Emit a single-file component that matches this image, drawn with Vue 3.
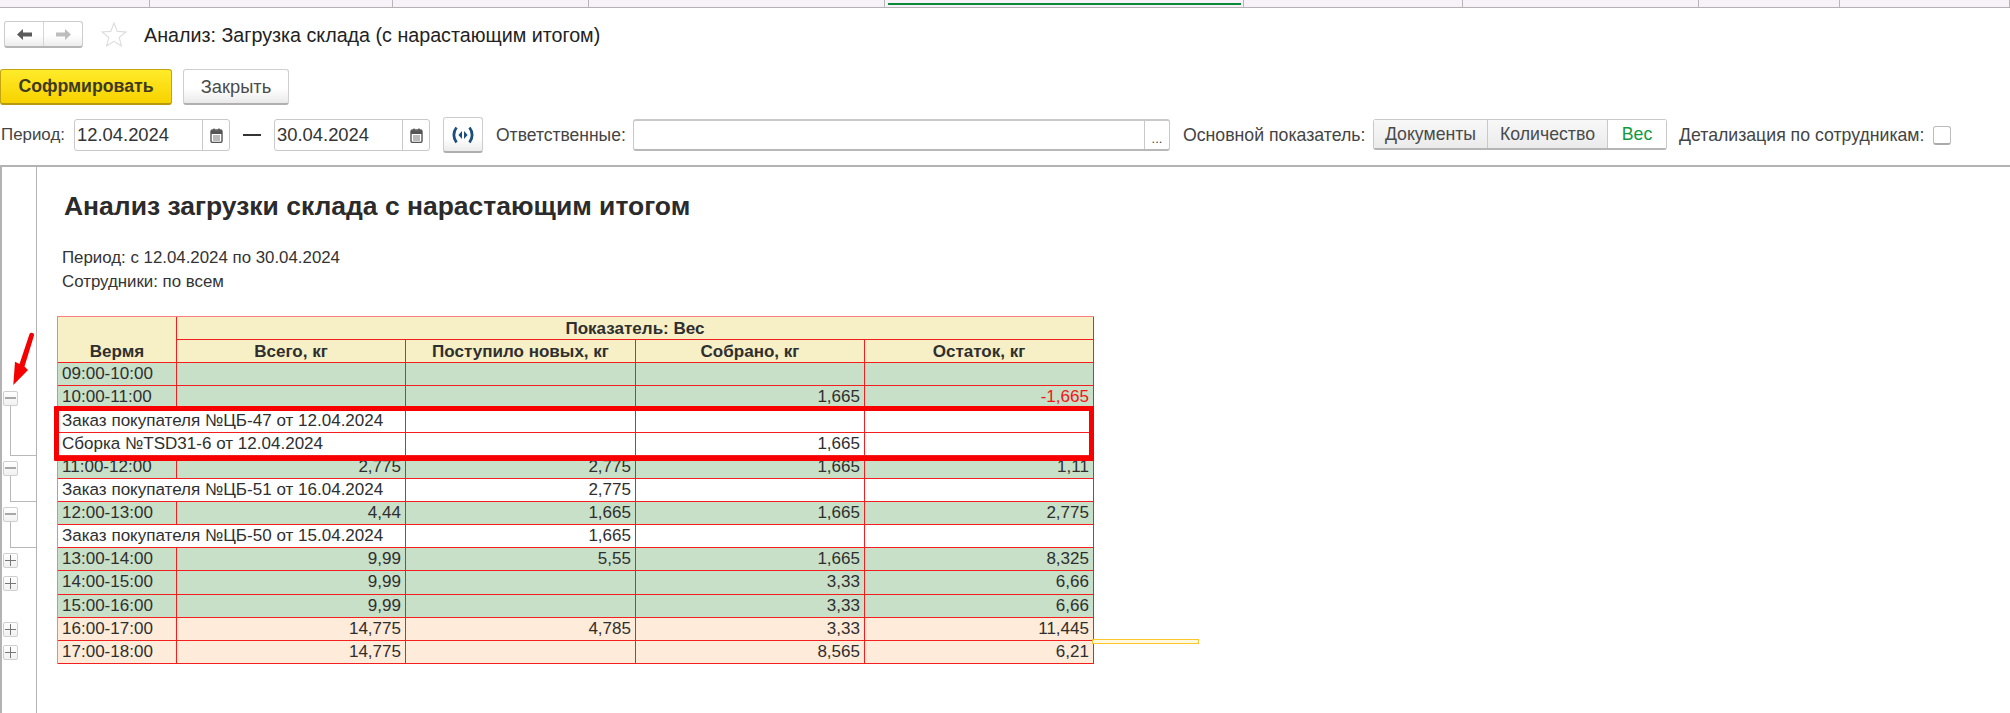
<script setup>
const tabs = [150, 243, 196, 296, 359, 219, 236, 141, 170]
const rows = [
  { kind: 'g', label: '09:00-10:00', v: ['', '', '', ''] },
  { kind: 'g', label: '10:00-11:00', v: ['', '', '1,665', '-1,665'], red: true },
  { kind: 'd', label: 'Заказ покупателя №ЦБ-47 от 12.04.2024', v: ['', '', ''] },
  { kind: 'd', label: 'Сборка №TSD31-6 от 12.04.2024', v: ['', '1,665', ''] },
  { kind: 'g', label: '11:00-12:00', v: ['2,775', '2,775', '1,665', '1,11'] },
  { kind: 'd', label: 'Заказ покупателя №ЦБ-51 от 16.04.2024', v: ['2,775', '', ''] },
  { kind: 'g', label: '12:00-13:00', v: ['4,44', '1,665', '1,665', '2,775'] },
  { kind: 'd', label: 'Заказ покупателя №ЦБ-50 от 15.04.2024', v: ['1,665', '', ''] },
  { kind: 'g', label: '13:00-14:00', v: ['9,99', '5,55', '1,665', '8,325'] },
  { kind: 'g', label: '14:00-15:00', v: ['9,99', '', '3,33', '6,66'] },
  { kind: 'g', label: '15:00-16:00', v: ['9,99', '', '3,33', '6,66'] },
  { kind: 'o', label: '16:00-17:00', v: ['14,775', '4,785', '3,33', '11,445'] },
  { kind: 'o', label: '17:00-18:00', v: ['14,775', '', '8,565', '6,21'] },
]
const tree = [
  { top: 224, sign: 'minus', tail: 50 },
  { top: 5, sign: 'minus', tail: 26 },
  { top: 5, sign: 'minus', tail: 26 },
  { top: 5, sign: 'plus', tail: 0 },
  { top: 8, sign: 'plus', tail: 0 },
  { top: 31, sign: 'plus', tail: 0 },
  { top: 8, sign: 'plus', tail: 0 },
]
</script>

<template>
  <div class="page">
    <div class="tabs">
      <div
        v-for="(w, i) in tabs"
        :key="i"
        class="tab"
        :class="{ active: i === 4 }"
        :style="{ width: w + 'px' }"
      ></div>
    </div>

    <div class="head">
      <div class="nav">
        <button class="nav-b">
          <svg width="15" height="11" viewBox="0 0 15 11"><path d="M0 5.5 6 0V3.5H15V7.5H6V11Z" fill="#5a5a5a" /></svg>
        </button>
        <button class="nav-b">
          <svg width="15" height="11" viewBox="0 0 15 11"><path d="M15 5.5 9 0V3.5H0V7.5H9V11Z" fill="#bdbdbd" /></svg>
        </button>
      </div>
      <svg class="star" width="26" height="25" viewBox="0 0 26 25">
        <path d="M13 1 16.2 9.4 25 9.9 18.2 15.5 20.4 24 13 19.3 5.6 24 7.8 15.5 1 9.9 9.8 9.4Z" fill="none" stroke="#dcdcdc" stroke-width="1.1" />
      </svg>
      <div class="title">Анализ: Загрузка склада (с нарастающим итогом)</div>
    </div>

    <div class="actions">
      <button class="primary">Софрмировать</button>
      <button class="secondary">Закрыть</button>
    </div>

    <div class="filters">
      <span class="lbl l-period">Период:</span>
      <div class="field date">
        <span class="val">12.04.2024</span>
        <span class="suffix cal">
          <svg width="13" height="15" viewBox="0 0 13 15"><path d="M1 3.5C1 2.6 1.6 2 2.5 2H10.5C11.4 2 12 2.6 12 3.5V13C12 13.8 11.4 14.4 10.5 14.4H2.5C1.6 14.4 1 13.8 1 13Z" fill="none" stroke="#555" stroke-width="1.4" /><path d="M1 2.6H12V6H1Z M3.3 0.5H4.7V3H3.3Z M8.3 0.5H9.7V3H8.3Z" fill="#555" /><path d="M3 8H10M3 10H10M3 12H10" stroke="#777" stroke-width="1" /></svg>
        </span>
      </div>
      <span class="dash"></span>
      <div class="field date">
        <span class="val">30.04.2024</span>
        <span class="suffix cal">
          <svg width="13" height="15" viewBox="0 0 13 15"><path d="M1 3.5C1 2.6 1.6 2 2.5 2H10.5C11.4 2 12 2.6 12 3.5V13C12 13.8 11.4 14.4 10.5 14.4H2.5C1.6 14.4 1 13.8 1 13Z" fill="none" stroke="#555" stroke-width="1.4" /><path d="M1 2.6H12V6H1Z M3.3 0.5H4.7V3H3.3Z M8.3 0.5H9.7V3H8.3Z" fill="#555" /><path d="M3 8H10M3 10H10M3 12H10" stroke="#777" stroke-width="1" /></svg>
        </span>
      </div>
      <button class="period-btn">
        <svg width="24" height="18" viewBox="0 0 24 18">
          <path d="M5.5 1.5C2 6 2 12 5.5 16.5M18.5 1.5C22 6 22 12 18.5 16.5" fill="none" stroke="#1d4f7c" stroke-width="2.8" />
          <path d="M11 5 7.4 9 11 13ZM13 5 16.6 9 13 13Z" fill="#1d4f7c" />
        </svg>
      </button>
      <span class="lbl l-resp">Ответственные:</span>
      <div class="field resp">
        <span class="val"></span>
        <span class="suffix dots">...</span>
      </div>
      <span class="lbl l-main">Основной показатель:</span>
      <div class="seg">
        <span class="seg-i s1">Документы</span>
        <span class="seg-i s2">Количество</span>
        <span class="seg-i s3 on">Вес</span>
      </div>
      <span class="lbl l-det">Детализация по сотрудникам:</span>
      <span class="check"></span>
    </div>

    <div class="report">
      <div class="gutter">
        <div
          v-for="(n, i) in tree"
          :key="i"
          class="node"
          :style="{ marginTop: n.top + 'px' }"
        >
          <div class="box" :class="n.sign"></div>
          <div v-if="n.tail" class="tail" :style="{ height: n.tail + 'px' }"></div>
        </div>
        <svg class="arrow" width="30" height="58" viewBox="0 0 30 58">
          <path d="M19.5 5C20.5 3 24.5 3.5 24 6.5L14.5 37.5 18 41 3.3 56 5 32.7 9.5 35Z" fill="#f50000" />
        </svg>
      </div>

      <div class="sheet">
        <h1 class="rep-title">Анализ загрузки склада с нарастающим итогом</h1>
        <div class="meta">Период: с 12.04.2024 по 30.04.2024</div>
        <div class="meta">Сотрудники: по всем</div>

        <div class="table">
          <div class="c hd time">Вермя</div>
          <div class="c hd top">Показатель: Вес</div>
          <div class="c hd">Всего, кг</div>
          <div class="c hd">Поступило новых, кг</div>
          <div class="c hd">Собрано, кг</div>
          <div class="c hd">Остаток, кг</div>

          <template v-for="(r, i) in rows" :key="i">
            <div class="c lab" :class="[r.kind, { wide: r.kind === 'd' }]">{{ r.label }}</div>
            <div
              v-for="(v, j) in r.v"
              :key="j"
              class="c num"
              :class="[r.kind, { neg: r.red && j === 3 }]"
            >{{ v }}</div>
          </template>

          <div class="mark"></div>
          <div class="sel"></div>
        </div>
      </div>
    </div>
  </div>
</template>

<style scoped>
.page {
  width: 2010px;
  height: 713px;
  overflow: hidden;
  background: #fff;
  font-family: "Liberation Sans", Arial, sans-serif;
  color: #333;
}
.tabs {
  display: flex;
  height: 8px;
  background: #f6f2f7;
  border-bottom: 1px solid #b4b0b4;
  box-sizing: border-box;
}
.tab {
  border-right: 1px solid #b9b5b9;
  box-sizing: border-box;
  position: relative;
}
.tab.active::after {
  content: "";
  position: absolute;
  left: 3px;
  right: 2px;
  top: 3px;
  height: 2px;
  background: #0a8a38;
}
.head {
  display: flex;
  align-items: center;
  height: 27px;
  margin-top: 13px;
  padding-left: 4px;
}
.nav {
  display: flex;
  width: 79px;
  height: 27px;
  box-sizing: border-box;
  border: 1px solid #cdcdcd;
  border-bottom: 2px solid #b5b5b5;
  border-radius: 3px;
  background: linear-gradient(#fff 55%, #ececec);
}
.nav-b {
  flex: 1;
  padding: 0;
  border: 0;
  background: none;
  display: flex;
  align-items: center;
  justify-content: center;
}
.nav-b:first-child {
  border-right: 1px solid #d5d5d5;
}
.star {
  margin-left: 18px;
}
.title {
  margin-left: 17px;
  font-size: 19.7px;
  line-height: 29px;
  padding-top: 1px;
  color: #222;
  white-space: nowrap;
}
.actions {
  display: flex;
  gap: 11px;
  margin-top: 21px;
  height: 36px;
}
.primary {
  width: 172px;
  height: 36px;
  padding: 0;
  border: 1px solid #c3a512;
  border-bottom: 2px solid #b79a10;
  border-radius: 3px;
  background: linear-gradient(#ffeb2a, #f7d200);
  font: bold 17.7px "Liberation Sans", Arial, sans-serif;
  color: #3d3a20;
}
.secondary {
  width: 106px;
  height: 36px;
  padding: 0;
  border: 1px solid #cfcfcf;
  border-bottom: 2px solid #b0b0b0;
  border-radius: 3px;
  background: linear-gradient(#fff 55%, #eaeaea);
  font: 18.3px "Liberation Sans", Arial, sans-serif;
  color: #4a4a4a;
}
.filters {
  display: flex;
  align-items: center;
  height: 36px;
  margin-top: 12px;
  padding-left: 1px;
  font-size: 17.7px;
  color: #444;
}
.lbl {
  white-space: nowrap;
  flex: none;
}
.l-period { width: 73px; font-size: 16.9px; }
.l-resp { width: 137px; margin-left: 13px; font-size: 17.5px; }
.l-main { width: 190px; margin-left: 13px; }
.l-det { width: 254px; margin-left: 12px; }
.field {
  display: flex;
  height: 32px;
  box-sizing: border-box;
  border: 1px solid #c9c9c9;
  border-radius: 3px;
  background: #fff;
  flex: none;
}
.date { width: 156px; }
.resp { width: 537px; border-top: 2px solid #c9c9c9; border-bottom: 2px solid #b8b8b8; }
.val {
  flex: 1;
  padding-left: 2px;
  line-height: 30px;
  font-size: 18.4px;
  color: #333;
}
.suffix {
  display: flex;
  align-items: center;
  justify-content: center;
  border-left: 1px solid #c9c9c9;
}
.cal { width: 26px; }
.dots {
  width: 25px;
  font-size: 13px;
  padding-top: 6px;
  box-sizing: border-box;
}
.dash {
  width: 18px;
  height: 1.5px;
  background: #333;
  margin: 0 13px;
  flex: none;
}
.period-btn {
  width: 40px;
  height: 36px;
  margin-left: 13px;
  padding: 0;
  border: 1px solid #cdcdcd;
  border-bottom: 2px solid #aeaeae;
  border-radius: 3px;
  background: linear-gradient(#fff 60%, #ececec);
  display: flex;
  align-items: center;
  justify-content: center;
  flex: none;
}
.seg {
  display: flex;
  height: 31px;
  box-sizing: border-box;
  margin-left: 0;
  border: 1px solid #c9c9c9;
  border-bottom: 2px solid #b5b5b5;
  border-radius: 3px;
  flex: none;
  margin-top: -1px;
}
.seg-i {
  display: flex;
  align-items: center;
  justify-content: center;
  background: linear-gradient(#f8f8f8, #ebebeb);
  border-right: 1px solid #c9c9c9;
  color: #4a4a4a;
  box-sizing: border-box;
}
.s1 { width: 114px; }
.s2 { width: 120px; }
.s3 { width: 58px; border-right: 0; }
.seg-i.on {
  background: #fff;
  color: #0f9a3c;
}
.check {
  width: 18px;
  height: 19px;
  box-sizing: border-box;
  border: 1px solid #bcbcbc;
  border-bottom: 2px solid #aaa;
  border-radius: 3px;
  flex: none;
  margin-left: 0;
}
.report {
  display: flex;
  margin-top: 12px;
  height: 548px;
  border-top: 2px solid #b3b3b3;
  box-sizing: border-box;
}
.gutter {
  position: relative;
  width: 37px;
  box-sizing: border-box;
  border-left: 2px solid #b3b3b3;
  border-right: 1px solid #b3b3b3;
  flex: none;
  display: flex;
  flex-direction: column;
  padding-left: 1px;
}
.box {
  position: relative;
  width: 15px;
  height: 15px;
  box-sizing: border-box;
  border: 1px solid #cfcfcf;
  border-radius: 2px;
  background: linear-gradient(#fff, #f1f1f1);
}
.box::before {
  content: "";
  position: absolute;
  left: 1px;
  right: 1px;
  top: 5px;
  height: 2px;
  background: #a8a8a8;
}
.box.plus::before {
  top: 6px;
  height: 1px;
  background: #777;
}
.box.plus::after {
  content: "";
  position: absolute;
  top: 1px;
  bottom: 1px;
  left: 6px;
  width: 1px;
  background: #777;
}
.tail {
  margin-left: 7px;
  width: 26px;
  box-sizing: border-box;
  border-left: 1px solid #b8b8b8;
  border-bottom: 1px solid #b8b8b8;
}
.arrow {
  position: absolute;
  left: 8px;
  top: 162px;
}
.sheet {
  flex: 1;
  padding-left: 20px;
  position: relative;
}
.rep-title {
  margin: 24px 0 0 7px;
  font-size: 26.47px;
  line-height: 30px;
  font-weight: bold;
  color: #2b2b2b;
  white-space: nowrap;
}
.meta {
  font-size: 16.85px;
  line-height: 24px;
  margin-left: 5px;
  color: #333;
  white-space: nowrap;
}
.rep-title + .meta {
  margin-top: 25px;
}
.table {
  position: relative;
  display: grid;
  grid-template-columns: 119px 229px 230px 229px 229px;
  grid-auto-rows: 23.13px;
  width: 1036px;
  margin-top: 22px;
  box-sizing: content-box;
  font-size: 17.05px;
  color: #2f2f2f;
  border-top: 1px solid #f98080;
  border-left: 1px solid #f98080;
  margin-left: 0;
}
.c {
  box-sizing: border-box;
  border-right: 1px solid #f31f1f;
  border-bottom: 1px solid #f31f1f;
  padding: 0 4px;
  line-height: 22px;
  white-space: nowrap;
  overflow: hidden;
}
.hd {
  background: #f7f0c6;
  font-weight: bold;
  text-align: center;
  padding-top: 1px;
}
.time {
  grid-row: span 2;
  line-height: 22px;
  padding-top: 24px;
}
.top {
  grid-column: span 4;
}
.g { background: #c8dfc8; }
.o { background: #feebd9; }
.d { background: #fff; }
.lab { padding-left: 4px; }
.wide {
  grid-column: span 2;
}
.num { text-align: right; }
.neg { color: #f31414; }
.mark {
  position: absolute;
  left: -4px;
  top: 89px;
  width: 1040px;
  height: 55px;
  box-sizing: border-box;
  border: 5px solid #f80000;
  border-radius: 1px;
  pointer-events: none;
}
.sel {
  position: absolute;
  left: 1034px;
  top: 322px;
  width: 107px;
  height: 5px;
  box-sizing: border-box;
  border: 1px solid #fdc62a;
  outline: 0;
  background: #fff9df;
}
</style>
